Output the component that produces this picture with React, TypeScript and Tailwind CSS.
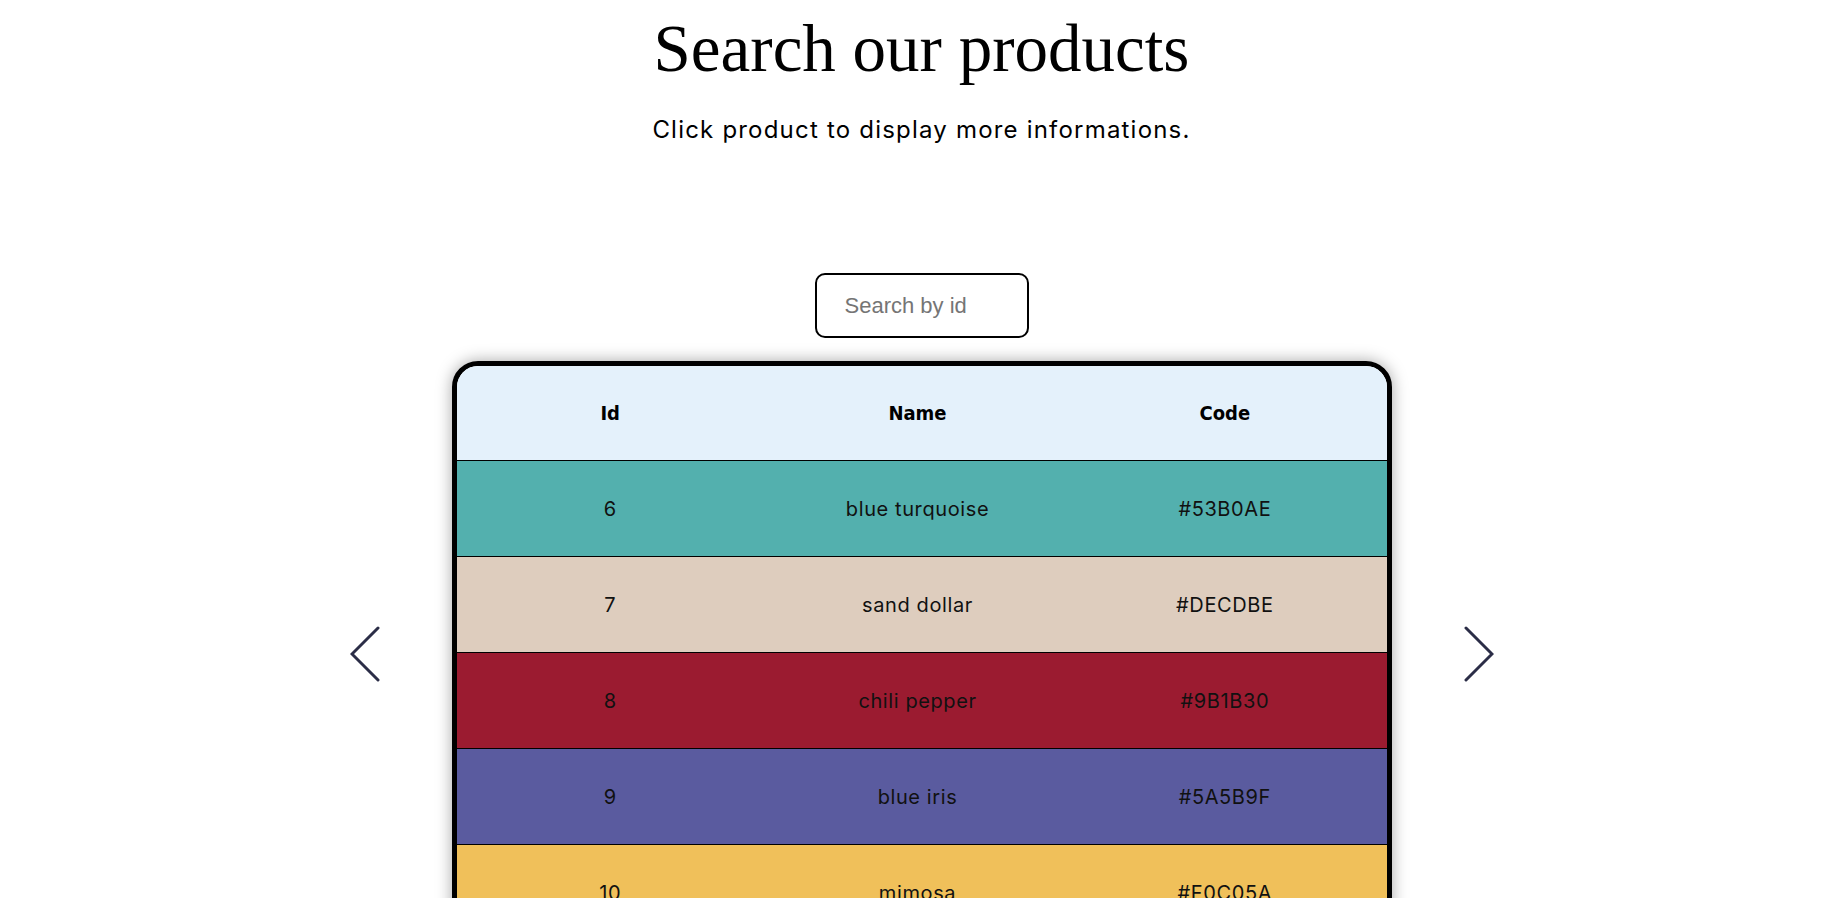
import React, { useState } from 'react';

type Product = { id: number; name: string; color: string };

const products: Product[] = [
  { id: 6, name: 'blue turquoise', color: '#53B0AE' },
  { id: 7, name: 'sand dollar', color: '#DECDBE' },
  { id: 8, name: 'chili pepper', color: '#9B1B30' },
  { id: 9, name: 'blue iris', color: '#5A5B9F' },
  { id: 10, name: 'mimosa', color: '#F0C05A' },
];

function Arrow({ dir }: { dir: 'left' | 'right' }) {
  return (
    <button className="shrink-0 text-[#2b2d47]" aria-label={dir === 'left' ? 'Previous page' : 'Next page'}>
      <svg width="30" height="56" viewBox="0 0 30 56" fill="none">
        {dir === 'left' ? (
          <path d="M28 2 L2 28 L28 54" stroke="currentColor" strokeWidth="3" strokeLinecap="round" />
        ) : (
          <path d="M2 2 L28 28 L2 54" stroke="currentColor" strokeWidth="3" strokeLinecap="round" />
        )}
      </svg>
    </button>
  );
}

export default function App() {
  const [query, setQuery] = useState('');

  const rows = query.trim() ? products.filter((p) => String(p.id) === query.trim()) : products;

  return (
    <div className="min-h-screen bg-white flex flex-col items-center">
      <h1 className="mt-[8px] text-[67px] leading-[80px] text-black font-['Liberation_Serif',serif]">
        Search our products
      </h1>
      <p className="mt-[26px] text-[24px] leading-[32px] tracking-[1.2px] text-black font-['Inter',sans-serif]">
        Click product to display more informations.
      </p>

      <input
        value={query}
        onChange={(e) => setQuery(e.target.value)}
        placeholder="Search by id"
        className="mt-[127px] w-[214px] h-[65px] rounded-[10px] border-2 border-black pl-[28px] pr-3 text-[22px] font-['Liberation_Sans',Arial,sans-serif] text-black placeholder:text-[#757575] outline-none"
      />

      <div className="mt-[23px] flex items-center gap-[72px]">
        <Arrow dir="left" />

        <div className="w-[940px] border-[5px] border-black rounded-[26px] overflow-hidden shadow-[0_0_16px_rgba(0,0,0,0.35)]">
          <div className="grid grid-cols-3 h-[95px] pr-[8px] items-center bg-[#e4f1fb] border-b border-black font-['DejaVu_Sans_Condensed','Liberation_Sans_Narrow','Lato',sans-serif] font-bold text-[20px] text-black text-center">
            <div>Id</div>
            <div>Name</div>
            <div>Code</div>
          </div>
          {rows.map((p) => (
            <div
              key={p.id}
              className="grid grid-cols-3 h-[96px] pr-[8px] items-center border-b border-black text-center text-[20px] tracking-[0.6px] text-[#111] font-['Inter',sans-serif] cursor-pointer"
              style={{ backgroundColor: p.color }}
            >
              <div>{p.id}</div>
              <div>{p.name}</div>
              <div>{p.color}</div>
            </div>
          ))}
        </div>

        <Arrow dir="right" />
      </div>
    </div>
  );
}
